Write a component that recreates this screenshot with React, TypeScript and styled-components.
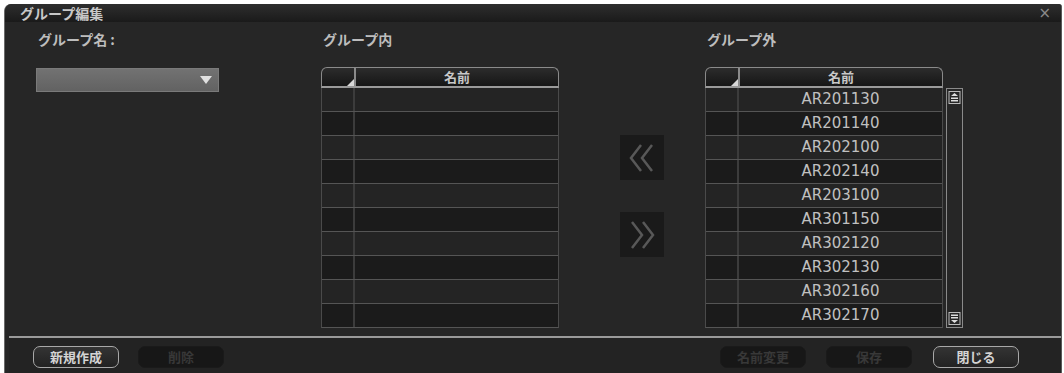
import React from "react";
import styled, { createGlobalStyle } from "styled-components";

const Global = createGlobalStyle`
  html, body { margin: 0; padding: 0; background: #ffffff; }
  body { font-family: "Noto Sans CJK JP", "Noto Sans", sans-serif; overflow: hidden; }
`;

const Page = styled.div`
  width: 1064px;
  height: 373px;
  padding: 4px 2px 0 4px;
  box-sizing: border-box;
  background: #fff;
`;

const Window = styled.div`
  height: 100%;
  background: #262626;
  border-top-left-radius: 7px;
  border-top-right-radius: 3px;
  border-left: 1px solid #6a6a6a;
  border-right: 1px solid #5a5a5a;
  display: flex;
  flex-direction: column;
  box-sizing: border-box;
`;

const TitleBar = styled.div`
  height: 18px;
  display: flex;
  align-items: center;
  justify-content: space-between;
  padding: 0 10px 0 15px;
  background: linear-gradient(#2e2e2e, #1a1a1a);
  border-top-left-radius: 7px;
  border-top-right-radius: 3px;
`;

const Title = styled.span`
  color: #c8c8c8;
  font-size: 14px;
  font-weight: 700;
  line-height: 1;
`;

const Close = styled.span`
  color: #8a8a8a;
  font-family: "DejaVu Sans", sans-serif;
  font-size: 15px;
  line-height: 1;
`;

const Body = styled.div`
  flex: 1;
  display: grid;
  grid-template-columns: 285px 238px 146px 238px 20px;
  padding: 8px 0 0 31px;
`;

const Column = styled.div`
  display: flex;
  flex-direction: column;
`;

const Label = styled.div<{ $indent?: number }>`
  color: #bdbdbd;
  font-size: 14px;
  font-weight: 700;
  line-height: 18px;
  height: 18px;
  padding-left: ${(p) => p.$indent ?? 2}px;
  margin-bottom: 19px;
`;

const Dropdown = styled.div`
  width: 183px;
  height: 24px;
  margin-top: 1px;
  background: linear-gradient(#727272, #626262);
  display: flex;
  align-items: center;
  justify-content: flex-end;
  padding-right: 5px;
  box-sizing: border-box;
  border: 1px solid #7a7a7a;
`;

const Table = styled.div`
  width: 238px;
  flex-shrink: 0;
  display: flex;
  flex-direction: column;
`;

const Header = styled.div`
  display: grid;
  grid-template-columns: 34px 1fr;
  border: 1px solid #8a8a8a;
  border-bottom: 2px solid #9a9a9a;
  border-radius: 6px 6px 0 0;
  background: linear-gradient(#2c2c2c, #161616);
  box-sizing: border-box;
  height: 21px;
  overflow: hidden;
`;

const CornerCell = styled.div`
  position: relative;
  border-right: 2px solid #8a8a8a;
`;

const CornerMark = styled.div`
  position: absolute;
  right: 0;
  bottom: 0;
  width: 0;
  height: 0;
  border-left: 7px solid transparent;
  border-bottom: 7px solid #d8d8d8;
`;

const HeaderName = styled.div`
  color: #c8c8c8;
  font-size: 13px;
  font-weight: 700;
  text-align: center;
  line-height: 17px;
`;

const Rows = styled.div`
  border-left: 1px solid #4a4a4a;
  border-right: 1px solid #4a4a4a;
  border-bottom: 1px solid #555;
`;

const Row = styled.div<{ $dark: boolean }>`
  height: 24px;
  box-sizing: border-box;
  display: grid;
  grid-template-columns: 33px 1fr;
  background: ${(p) => (p.$dark ? "#1b1b1b" : "#242424")};
  border-bottom: 1px solid #555;
  &:last-child { border-bottom: none; height: 23px; }
`;

const RowSel = styled.div`
  border-right: 2px solid #3c3c3c;
`;

const RowName = styled.div`
  color: #c0c0c0;
  font-family: "DejaVu Sans", "Noto Sans", sans-serif;
  font-size: 15px;
  text-align: center;
  line-height: 23px;
`;

const ArrowCol = styled.div`
  display: flex;
  flex-direction: column;
  gap: 32px;
  padding: 105px 0 0 61px;
`;

const ArrowButton = styled.div`
  width: 44px;
  height: 45px;
  background: #1a1a1a;
  display: flex;
  align-items: center;
  justify-content: center;
`;

const TableWrap = styled.div`
  display: flex;
  align-items: flex-start;
  gap: 3px;
`;

const ScrollBar = styled.div`
  margin-top: 21px;
  width: 17px;
  flex-shrink: 0;
  height: 240px;
  box-sizing: border-box;
  border: 1px solid #8a8a8a;
  display: flex;
  flex-direction: column;
  justify-content: space-between;
  align-items: center;
  padding: 2px 0;
`;

const Footer = styled.div`
  border-top: 2px solid #9a9a9a;
  margin-left: 4px;
  height: 37px;
  display: flex;
  align-items: center;
  padding: 2px 0 0 24px;
  box-sizing: border-box;
  background: #232323;
`;

const Btn = styled.div<{ $disabled?: boolean; $gap?: number }>`
  width: 86px;
  height: 22px;
  box-sizing: border-box;
  margin-left: ${(p) => p.$gap ?? 0}px;
  border-radius: 7px;
  border: ${(p) => (p.$disabled ? "1px solid #1a1a1a" : "1.5px solid #a8a8a8")};
  background: ${(p) => (p.$disabled ? "#171717" : "linear-gradient(#343434, #222)")};
  color: ${(p) => (p.$disabled ? "#383838" : "#d4d4d4")};
  font-size: 13px;
  font-weight: 700;
  display: flex;
  align-items: center;
  justify-content: center;
  line-height: 1;
`;

const Spacer = styled.div`
  flex: 1;
`;

const EndGap = styled.div`
  width: 42px;
`;

const inItems: string[] = Array(10).fill("");
const outItems = [
  "AR201130",
  "AR201140",
  "AR202100",
  "AR202140",
  "AR203100",
  "AR301150",
  "AR302120",
  "AR302130",
  "AR302160",
  "AR302170",
];

const DataTable: React.FC<{ items: string[] }> = ({ items }) => (
  <Table>
    <Header>
      <CornerCell>
        <CornerMark />
      </CornerCell>
      <HeaderName>名前</HeaderName>
    </Header>
    <Rows>
      {items.map((it, i) => (
        <Row key={i} $dark={i % 2 === 1}>
          <RowSel />
          <RowName>{it}</RowName>
        </Row>
      ))}
    </Rows>
  </Table>
);

const Chevrons: React.FC<{ dir: "left" | "right" }> = ({ dir }) => (
  <svg width="30" height="32" viewBox="0 0 30 32">
    {dir === "left" ? (
      <g fill="none" stroke="#585858" strokeWidth="2.5">
        <polyline points="14,3 4,16 14,29" />
        <polyline points="25,3 15,16 25,29" />
      </g>
    ) : (
      <g fill="none" stroke="#585858" strokeWidth="2.5">
        <polyline points="5,3 15,16 5,29" />
        <polyline points="16,3 26,16 16,29" />
      </g>
    )}
  </svg>
);

const ScrollIcon: React.FC<{ up: boolean }> = ({ up }) => (
  <svg width="13" height="13" viewBox="0 0 13 13">
    {up ? (
      <g>
        <rect x="1" y="0.5" width="11" height="12" fill="none" stroke="#bbb" strokeWidth="1" />
        <polygon points="6.5,2 10,5 3,5" fill="#ddd" />
        <rect x="3" y="6.5" width="7" height="1.5" fill="#ddd" />
        <rect x="3" y="9" width="7" height="1.5" fill="#ddd" />
      </g>
    ) : (
      <g>
        <rect x="1" y="0.5" width="11" height="12" fill="none" stroke="#bbb" strokeWidth="1" />
        <rect x="3" y="2.5" width="7" height="1.5" fill="#ddd" />
        <rect x="3" y="5" width="7" height="1.5" fill="#ddd" />
        <polygon points="3,8 10,8 6.5,11" fill="#ddd" />
      </g>
    )}
  </svg>
);

export default function App() {
  return (
    <Page>
      <Global />
      <Window>
        <TitleBar>
          <Title>グループ編集</Title>
          <Close>×</Close>
        </TitleBar>
        <Body>
          <Column>
            <Label $indent={2}>グループ名 :</Label>
            <Dropdown>
              <svg width="14" height="10" viewBox="0 0 14 10">
                <polygon points="1,1 13,1 7,9" fill="#e0e0e0" />
              </svg>
            </Dropdown>
          </Column>
          <Column>
            <Label>グループ内</Label>
            <DataTable items={inItems} />
          </Column>
          <ArrowCol>
            <ArrowButton>
              <Chevrons dir="left" />
            </ArrowButton>
            <ArrowButton>
              <Chevrons dir="right" />
            </ArrowButton>
          </ArrowCol>
          <Column>
            <Label>グループ外</Label>
            <TableWrap>
              <DataTable items={outItems} />
              <ScrollBar>
                <ScrollIcon up />
                <ScrollIcon up={false} />
              </ScrollBar>
            </TableWrap>
          </Column>
        </Body>
        <Footer>
          <Btn>新規作成</Btn>
          <Btn $disabled $gap={19}>削除</Btn>
          <Spacer />
          <Btn $disabled>名前変更</Btn>
          <Btn $disabled $gap={20}>保存</Btn>
          <Btn $gap={21}>閉じる</Btn>
          <EndGap />
        </Footer>
      </Window>
    </Page>
  );
}
